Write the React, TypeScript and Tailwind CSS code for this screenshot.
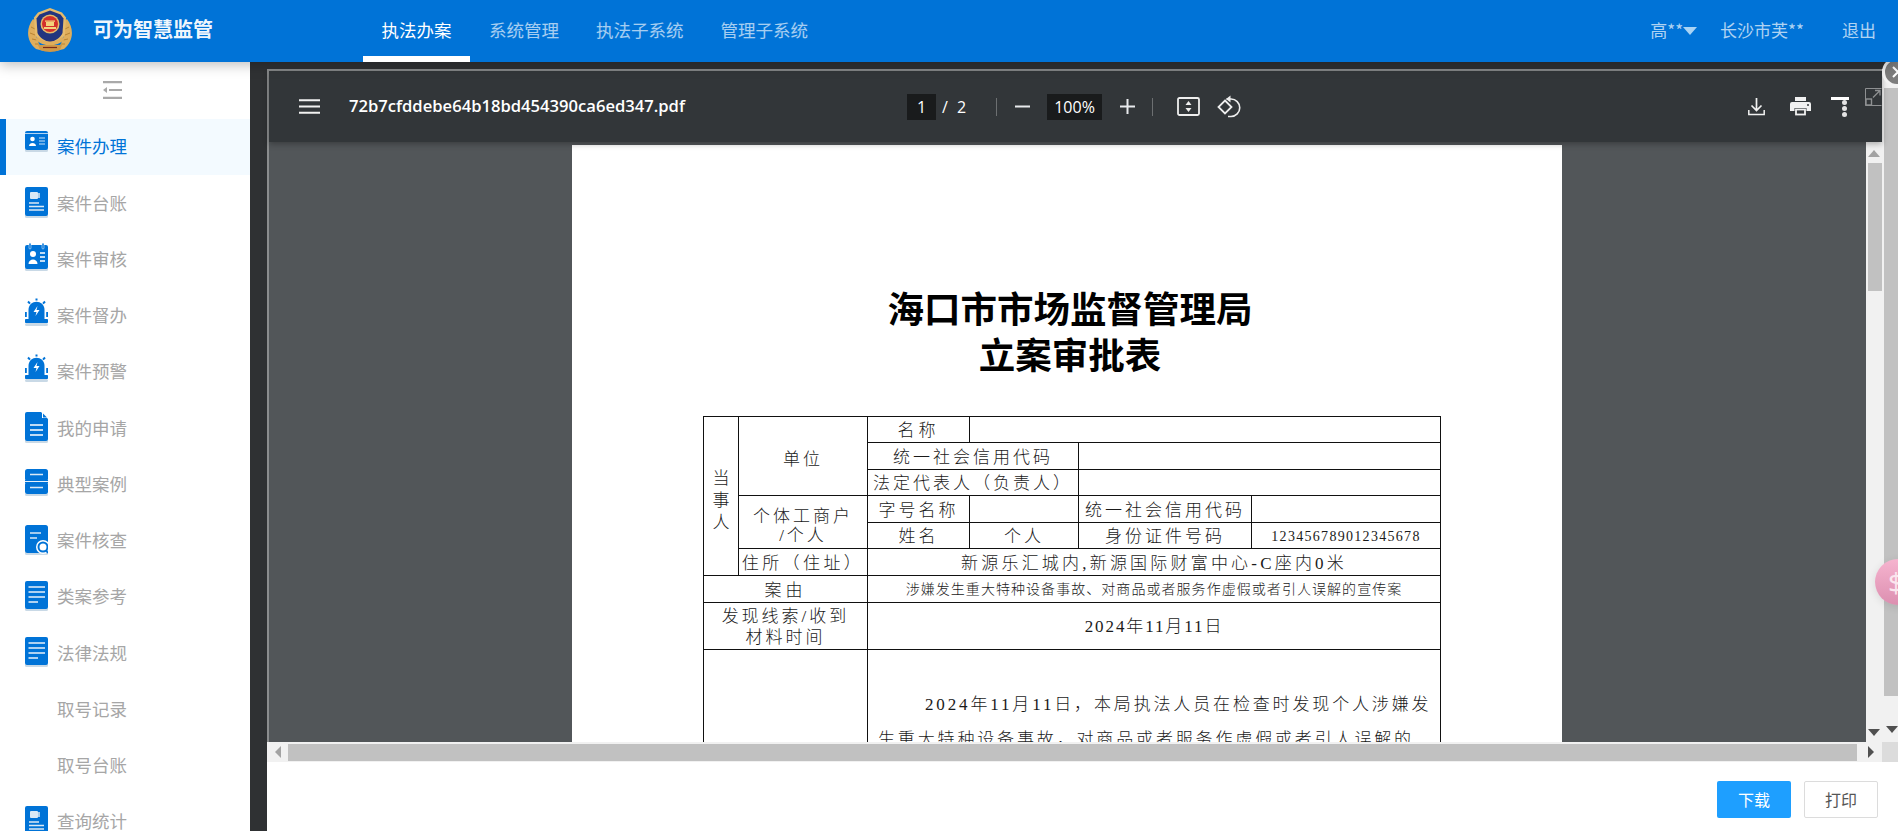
import React from "react";

const CJK = "font-['Noto_Sans','Noto_Sans_CJK_SC',sans-serif]";
const BLUE = "#0073d7";
const SHADE = "#c9d9e6";

function Logo() {
  return (
    <svg width="46" height="46" viewBox="0 0 46 46" className="shrink-0">
      <path d="M6 12 C-1 21 -1 34 9 42 L17 44 C10 36 7 25 10 15 Z" fill="#dfae5c" />
      <path d="M40 12 C47 21 47 34 37 42 L29 44 C36 36 39 25 36 15 Z" fill="#dfae5c" />
      <path d="M4 20 L8 22 M3 26 L8 28 M5 32 L9.5 33 M8 37 L12 37 M42 20 L38 22 M43 26 L38 28 M41 32 L36.5 33 M38 37 L34 37" stroke="#b98434" strokeWidth="1" />
      <path d="M23 1 L35 5.5 L39 10.5 L38 27 C36 33 29 36 23 38 C17 36 10 33 8 27 L7 10.5 L11 5.5 Z" fill="#e6bb6c" />
      <path d="M23 3.5 L33.5 7.5 L36.5 11.5 L35.5 26 C33.5 31 28 33.5 23 35.5 C18 33.5 12.5 31 10.5 26 L9.5 11.5 L12.5 7.5 Z" fill="#23357f" />
      <circle cx="23" cy="17" r="9.5" fill="#e6bb6c" />
      <circle cx="23" cy="17" r="8" fill="#d3302b" />
      <path d="M17 20 H29 V22 H17 Z M19 15 H27 V19 H19 Z M18 13.5 H28 V14.8 H18 Z" fill="#f3d27c" />
      <path d="M11 30 C17 36 29 36 35 30 L37 33 C30 40 16 40 9 33 Z" fill="#dfae5c" />
      <path d="M11 38 H35 L33 43 C26 45.5 20 45.5 13 43 Z" fill="#cf9847" />
      <path d="M16 40.5 H30" stroke="#7a2a1a" strokeWidth="1.2" />
    </svg>
  );
}

function Shade({ y, h = 3 }: { y: number; h?: number }) {
  return <rect x="0" y={y} width="23" height={h} rx="1.5" fill={SHADE} />;
}

function MenuIcon({ kind }: { kind: string }) {
  const white = "#ffffff";
  let body: React.ReactNode = null;
  if (kind === "card") {
    body = (
      <>
        <Shade y={22} h={4} />
        <rect x="0" y="5" width="23" height="19" rx="2" fill={BLUE} />
        <rect x="0" y="7" width="23" height="1" fill={white} opacity="0.7" />
        <circle cx="7.5" cy="13" r="2.3" fill={white} />
        <path d="M4 20 C4 16 11 16 11 20 Z" fill={white} />
        <path d="M14 12 H20 M14 15 H20 M14 18 H20" stroke={white} strokeWidth="1" opacity="0.8" />
      </>
    );
  } else if (kind === "book") {
    body = (
      <>
        <Shade y={32} h={4} />
        <rect x="0" y="5" width="23" height="29" rx="2" fill={BLUE} />
        <rect x="5" y="10" width="8" height="7" rx="1" fill="#dbe9f5" />
        <rect x="13" y="11" width="2" height="5" fill="#a9cdec" />
        <path d="M4 21 H14 M4 24.5 H19 M4 28 H19" stroke="#dbe9f5" strokeWidth="1.4" />
      </>
    );
  } else if (kind === "audit") {
    body = (
      <>
        <Shade y={28} h={4} />
        <rect x="0" y="6" width="23" height="24" rx="2" fill={BLUE} />
        <rect x="4" y="4" width="2" height="6" rx="1" fill={BLUE} stroke={white} strokeWidth="0.5" />
        <rect x="17" y="4" width="2" height="6" rx="1" fill={BLUE} stroke={white} strokeWidth="0.5" />
        <circle cx="8" cy="15" r="3" fill={white} />
        <path d="M3.5 25 C3.5 19 12.5 19 12.5 25 Z" fill={white} />
        <path d="M15 14 H20 M15 18 H20 M15 22 H20" stroke={white} strokeWidth="1.3" />
      </>
    );
  } else if (kind === "alarm") {
    body = (
      <>
        <Shade y={28} h={3} />
        <path d="M3.5 26 V15 C3.5 4 19.5 4 19.5 15 V26 Z" fill={BLUE} />
        <rect x="0" y="24" width="23" height="4" rx="0.8" fill={BLUE} />
        <path d="M12.5 11 L8.5 17 H11.5 L10.5 21 L14.5 15 H11.5 Z" fill={white} />
        <path d="M11.5 3.5 V5.5 M3 6.5 L5 8.6 M20 6.5 L18 8.6 M0.8 17 V22 M22.2 17 V22" stroke={BLUE} strokeWidth="2" />
      </>
    );
  } else if (kind === "doc") {
    body = (
      <>
        <Shade y={32} h={4} />
        <path d="M2 5 H16 L23 12 V32 Q23 34 21 34 H2 Q0 34 0 32 V7 Q0 5 2 5 Z" fill={BLUE} />
        <path d="M17 5 L23 11 H17 Z" fill="#ffffff" />
        <path d="M18 6.5 L22 10.5 H18 Z" fill={BLUE} />
        <path d="M5 18 H18 M5 23 H18 M5 28 H18" stroke={white} strokeWidth="1.6" />
      </>
    );
  } else if (kind === "bars") {
    body = (
      <>
        <Shade y={29} h={3} />
        <rect x="0" y="5" width="23" height="12" rx="2.5" fill={BLUE} />
        <rect x="0" y="18" width="23" height="12" rx="2.5" fill={BLUE} />
        <path d="M5 10.5 H18 M5 23.5 H18" stroke="#dbe9f5" strokeWidth="1.5" />
        <rect x="0" y="16" width="23" height="3" fill={BLUE} />
        <path d="M0 17.5 H23" stroke="#ffffff" strokeWidth="1" opacity="0.9" />
      </>
    );
  } else if (kind === "search") {
    body = (
      <>
        <Shade y={31} h={4} />
        <rect x="0" y="5" width="23" height="28" rx="2.5" fill={BLUE} />
        <path d="M5 13 H16 M5 18 H12" stroke="#dbe9f5" strokeWidth="1.6" />
        <circle cx="18" cy="27" r="7" fill="#ffffff" />
        <circle cx="18" cy="27" r="4.5" fill="none" stroke={BLUE} strokeWidth="2" />
        <path d="M21 30 L23 33" stroke={BLUE} strokeWidth="2" />
      </>
    );
  } else if (kind === "lines") {
    body = (
      <>
        <Shade y={31} h={4} />
        <rect x="0" y="5" width="23" height="28" rx="2" fill={BLUE} />
        <path d="M3.5 11 H20 M3.5 16 H20 M3.5 21 H20 M3.5 26 H13" stroke="#e7f1fa" strokeWidth="1.3" />
      </>
    );
  }
  return (
    <svg width="23" height="36" viewBox="0 0 23 36" className="shrink-0">
      {body}
    </svg>
  );
}

const MENU = [
  { t: "案件办理", k: "card", active: true },
  { t: "案件台账", k: "book" },
  { t: "案件审核", k: "audit" },
  { t: "案件督办", k: "alarm" },
  { t: "案件预警", k: "alarm" },
  { t: "我的申请", k: "doc" },
  { t: "典型案例", k: "bars" },
  { t: "案件核查", k: "search" },
  { t: "类案参考", k: "lines" },
  { t: "法律法规", k: "lines" },
  { t: "取号记录", k: "" },
  { t: "取号台账", k: "" },
  { t: "查询统计", k: "book" },
];

function Sidebar() {
  return (
    <aside className="w-[250px] shrink-0 bg-white overflow-hidden">
      <div className="h-[57px] flex items-center justify-center pr-[26px] pb-[2px]">
        <svg width="20" height="18" viewBox="0 0 20 18">
          <path d="M1 1.2 H20 M7 9 H20 M1 16.8 H20" stroke="#a9a9a9" strokeWidth="2.2" />
          <path d="M1 9 L5 6 V12 Z" fill="#a9a9a9" />
        </svg>
      </div>
      {MENU.map((m) => (
        <div
          key={m.t}
          className={
            m.active
              ? "h-[56.25px] flex items-center border-l-[6px] border-[#0073d7] bg-[#f3faff] pl-[19px] text-[#0073d7]"
              : "h-[56.25px] flex items-center pl-[25px] text-[#a6a6a6]"
          }
        >
          <div className="w-[23px] h-[36px] mt-[-6px]">{m.k ? <MenuIcon kind={m.k} /> : null}</div>
          <span className="ml-[9px] text-[17.5px] leading-none">{m.t}</span>
        </div>
      ))}
    </aside>
  );
}

function Header() {
  const nav = ["系统管理", "执法子系统", "管理子系统"];
  return (
    <header className="h-[62px] shrink-0 bg-[#0073d7] flex items-center relative z-20 shadow-[0_3px_12px_rgba(0,0,0,0.25)]">
      <div className="ml-[27px] mt-[-3px]">
        <Logo />
      </div>
      <div className="ml-[20px] w-[270px] text-[20px] font-bold text-white/95 mt-[-2px]">可为智慧监管</div>
      <div className="h-full relative w-[107px] flex items-center justify-center text-[17.5px] text-white mt-0">
        <span className="mt-[-2px]">执法办案</span>
        <div className="absolute left-0 right-0 bottom-0 h-[6px] bg-white" />
      </div>
      {nav.map((n) => (
        <div key={n} className="ml-[19px] mr-[18px] text-[17.5px] text-white/65 mt-[-2px]">
          {n}
        </div>
      ))}
      <div className="ml-auto flex items-center text-[17px] text-white/70 mt-[-2px] pr-[22px] font-['Noto_Sans_CJK_SC',sans-serif]">
        <span>高**</span>
        <svg width="14" height="8" viewBox="0 0 14 8" className="mr-[23px] mt-[2px]">
          <path d="M0 0 H14 L7 8 Z" fill="#a9d4f5" />
        </svg>
        <span className="mr-[38px]">长沙市芙**</span>
        <span>退出</span>
      </div>
    </header>
  );
}

function Divider({ ml }: { ml: string }) {
  return <div className={`w-px h-[18px] bg-[#6c6f71] ${ml}`} />;
}

function Toolbar() {
  return (
    <div className="relative z-10 h-[71px] shrink-0 bg-[#323639] shadow-[0_2px_6px_rgba(0,0,0,0.3)] flex items-center text-white font-['Open_Sans','Noto_Sans',sans-serif]">
      <svg width="21" height="15" viewBox="0 0 21 15" className="ml-[30px] shrink-0">
        <path d="M0 1.2 H21 M0 7.5 H21 M0 13.8 H21" stroke="#f1f1f1" strokeWidth="2" />
      </svg>
      <div className="ml-[29px] w-[336px] shrink-0 text-[16.6px] font-semibold whitespace-nowrap">
        72b7cfddebe64b18bd454390ca6ed347.pdf
      </div>
      <div className="ml-[222px] w-[29px] h-[26px] bg-[#191b1c] flex items-center justify-center text-[16px] shrink-0">1</div>
      <span className="ml-[6px] text-[16px]">/</span>
      <span className="ml-[9px] text-[16px]">2</span>
      <Divider ml="ml-[30px]" />
      <svg width="15" height="15" viewBox="0 0 15 15" className="ml-[18px] shrink-0">
        <path d="M0 7.5 H15" stroke="#e8eaed" strokeWidth="2" />
      </svg>
      <div className="ml-[17px] w-[55px] h-[26px] bg-[#191b1c] flex items-center justify-center text-[16px] shrink-0">100%</div>
      <svg width="15" height="15" viewBox="0 0 15 15" className="ml-[18px] shrink-0">
        <path d="M0 7.5 H15 M7.5 0 V15" stroke="#e8eaed" strokeWidth="2" />
      </svg>
      <Divider ml="ml-[17px]" />
      <svg width="23" height="19" viewBox="0 0 23 19" className="ml-[24px] shrink-0">
        <rect x="1" y="1" width="21" height="17" rx="1.5" fill="none" stroke="#eeeeee" strokeWidth="1.8" />
        <path d="M11.5 4 L14.5 8 H8.5 Z M11.5 15 L14.5 11 H8.5 Z" fill="#eeeeee" />
      </svg>
      <svg width="24" height="23" viewBox="0 0 24 23" className="ml-[17px] shrink-0">
        <path d="M8 5.5 L14.5 12 L8 18.5 L1.5 12 Z" fill="none" stroke="#eeeeee" strokeWidth="1.8" />
        <path d="M9.5 4 H14 A8.5 8.5 0 0 1 14 21.5 H11" fill="none" stroke="#eeeeee" strokeWidth="1.6" />
        <path d="M13.5 0.5 V7.5 L9 4 Z" fill="#eeeeee" />
      </svg>
      <svg width="17" height="18" viewBox="0 0 17 18" className="ml-[507px] shrink-0">
        <path d="M8.5 0 V12 M3.5 7.5 L8.5 12.5 L13.5 7.5" fill="none" stroke="#f1f1f1" strokeWidth="1.7" />
        <path d="M0.8 12 V16.5 H16.2 V12" fill="none" stroke="#f1f1f1" strokeWidth="1.5" />
      </svg>
      <svg width="21" height="19" viewBox="0 0 21 19" className="ml-[25px] shrink-0">
        <path d="M5 0 H16 V4 H5 Z" fill="#f1f1f1" />
        <path d="M2 5 H19 Q21 5 21 7 V14 H16.5 V11 H4.5 V14 H0 V7 Q0 5 2 5 Z" fill="#f1f1f1" />
        <rect x="6" y="12.5" width="9" height="5" fill="none" stroke="#f1f1f1" strokeWidth="1.8" />
        <circle cx="18" cy="8" r="1" fill="#323639" />
      </svg>
      <div className="ml-[20px] w-[18px] h-[20px] relative shrink-0">
        <div className="h-[3px] bg-white" />
        <div className="absolute left-[11px] top-[3px] w-[5px] h-[5px] rounded-full bg-[#e4e4e4]" />
        <div className="absolute left-[11px] top-[9px] w-[5px] h-[5px] rounded-full bg-[#e4e4e4]" />
        <div className="absolute left-[11px] top-[15px] w-[5px] h-[5px] rounded-full bg-[#e4e4e4]" />
      </div>
      <svg width="17" height="18" viewBox="0 0 17 18" className="absolute left-[1596px] top-[17px]">
        <path d="M0.5 17.5 V0.5 H16.5 M16.5 17.5 H0.5" fill="none" stroke="#8e9092" strokeWidth="1" />
        <rect x="1" y="11" width="5.5" height="6" fill="none" stroke="#8e9092" strokeWidth="1.4" />
        <path d="M8 9.5 L15 2.5 M10 2.5 H15 V7.5" fill="none" stroke="#8e9092" strokeWidth="1.3" />
      </svg>
    </div>
  );
}

function Td({
  children,
  colSpan,
  rowSpan,
  cls = "",
}: {
  children?: React.ReactNode;
  colSpan?: number;
  rowSpan?: number;
  cls?: string;
}) {
  return (
    <td colSpan={colSpan} rowSpan={rowSpan} className={`border border-[#111] p-0 text-center align-middle overflow-hidden ${cls}`}>
      {children}
    </td>
  );
}

function PdfTable() {
  const sp = "tracking-[3px] pt-[2px]";
  return (
    <table className="w-[737px] ml-[131px] table-fixed border-collapse text-[17px] leading-[21px] font-light text-[#1a1a1a] font-['Liberation_Serif','Noto_Sans_CJK_SC',serif]">
      <colgroup>
        <col className="w-[35px]" />
        <col className="w-[129px]" />
        <col className="w-[102px]" />
        <col className="w-[109px]" />
        <col className="w-[173px]" />
        <col className="w-[189px]" />
      </colgroup>
      <tbody>
        <tr className="h-[26px]">
          <Td rowSpan={6} cls="leading-[22px] pt-[10px]">
            当<br />事<br />人
          </Td>
          <Td rowSpan={3} cls={`${sp} pt-[6px]`}>单位</Td>
          <Td cls="tracking-[4px] pt-[2px]">名称</Td>
          <Td colSpan={3} />
        </tr>
        <tr className="h-[27px]">
          <Td colSpan={2} cls={sp}>统一社会信用代码</Td>
          <Td colSpan={2} />
        </tr>
        <tr className="h-[26px]">
          <Td colSpan={2} cls="tracking-[3px] pt-[2px] whitespace-nowrap">法定代表人（负责人）</Td>
          <Td colSpan={2} />
        </tr>
        <tr className="h-[27px]">
          <Td rowSpan={2} cls="tracking-[3px] leading-[19px] pt-[7px]">
            个体工商户
            <br />
            /个人
          </Td>
          <Td cls={sp}>字号名称</Td>
          <Td />
          <Td cls={sp}>统一社会信用代码</Td>
          <Td />
        </tr>
        <tr className="h-[26px]">
          <Td cls={sp}>姓名</Td>
          <Td cls={sp}>个人</Td>
          <Td cls={sp}>身份证件号码</Td>
          <Td cls="text-[14px] tracking-[1.3px] pt-[2px]">123456789012345678</Td>
        </tr>
        <tr className="h-[27px]">
          <Td cls="tracking-[3.4px] pt-[2px] whitespace-nowrap">住所（住址）</Td>
          <Td colSpan={4} cls="tracking-[3.2px] pt-[2px] whitespace-nowrap">新源乐汇城内,新源国际财富中心-C座内0米</Td>
        </tr>
        <tr className="h-[27px]">
          <Td colSpan={2} cls="tracking-[4px] pt-[2px]">案由</Td>
          <Td colSpan={4} cls="text-[14px] tracking-[1.05px] whitespace-nowrap">涉嫌发生重大特种设备事故、对商品或者服务作虚假或者引人误解的宣传案</Td>
        </tr>
        <tr className="h-[47px]">
          <Td colSpan={2} cls="tracking-[3px] leading-[21px] pt-[1px]">
            发现线索/收到
            <br />
            材料时间
          </Td>
          <Td colSpan={4} cls="tracking-[1.9px]">2024年11月11日</Td>
        </tr>
        <tr className="h-[300px]">
          <Td colSpan={2} />
          <Td colSpan={4} cls="align-top">
            <p className="mt-[37px] px-[10px] text-left tracking-[2.85px] leading-[35px] indent-[47px] whitespace-nowrap">
              2024年11月11日，本局执法人员在检查时发现个人涉嫌发
              <br />
              生重大特种设备事故，对商品或者服务作虚假或者引人误解的
            </p>
          </Td>
        </tr>
      </tbody>
    </table>
  );
}

function Tri({ d, x = "" }: { d: string; x?: string }) {
  const paths: Record<string, string> = {
    up: "M0 8 L6 1 L12 8 Z",
    down: "M0 1 H12 L6 8 Z",
  };
  return (
    <svg width="12" height="9" viewBox="0 0 12 9" className={x}>
      <path d={paths[d]} fill={d === "up" ? "#a3a3a3" : "#505050"} />
    </svg>
  );
}

function PdfViewer() {
  return (
    <div className="flex-1 min-w-0 flex flex-col border-t-2 border-l-2 border-[#8b8d8e]">
      <Toolbar />
      <div className="flex-1 min-h-0 flex">
        <div className="flex-1 min-w-0 bg-[#525659] overflow-hidden pt-[3px] pl-[303px]">
          <div className="w-[990px] h-[1000px] bg-white pt-[140px]">
            <div className="text-[36.5px] leading-[46px] font-bold text-center text-black mb-[39px] ml-[6px] font-['Noto_Sans_CJK_SC',sans-serif]">
              海口市市场监督管理局
              <br />
              立案审批表
            </div>
            <PdfTable />
          </div>
        </div>
        <div className="w-[16px] shrink-0 bg-[#f1f1f1] flex flex-col items-center">
          <Tri d="up" x="mt-[7px]" />
          <div className="mt-[5px] w-[14px] ml-[2px] h-[128px] bg-[#c1c1c1]" />
          <div className="flex-1" />
          <Tri d="down" x="mb-[5px]" />
        </div>
      </div>
    </div>
  );
}

function OuterScrollbar() {
  return (
    <div className="w-[16px] shrink-0 bg-[#f1f1f1] flex flex-col pl-[2px] pt-[19px]">
      <div className="flex-1 bg-[#c1c1c1] mb-[29px]" />
      <Tri d="down" x="mb-[8px] ml-[2px]" />
    </div>
  );
}

function HScroll() {
  return (
    <div className="h-[20px] shrink-0 flex">
      <div className="flex-1 bg-[#f1f1f1] flex items-center pl-[7px]">
        <svg width="8" height="12" viewBox="0 0 8 12" className="shrink-0">
          <path d="M7 0 V12 L1 6 Z" fill="#a3a3a3" />
        </svg>
        <div className="ml-[6px] w-[1569px] h-[17px] bg-[#c1c1c1] shrink-0" />
        <svg width="8" height="12" viewBox="0 0 8 12" className="ml-[10px] shrink-0">
          <path d="M1 0 V12 L7 6 Z" fill="#505050" />
        </svg>
      </div>
      <div className="w-[16px] bg-[#dcdcdc] shrink-0" />
    </div>
  );
}

function Footer() {
  return (
    <div className="h-[69px] shrink-0 bg-white flex items-start justify-end pt-[19px] pr-[20px] gap-[13px]">
      <button className="w-[74px] h-[37px] rounded-[2px] bg-[#1e9fff] text-white text-[16px]">下载</button>
      <button className="w-[74px] h-[37px] rounded-[2px] bg-white border border-[#dcdcdc] text-[#555] text-[16px]">打印</button>
    </div>
  );
}

export default function App() {
  return (
    <div className={`w-[1898px] h-[831px] overflow-hidden flex flex-col relative ${CJK}`}>
      <Header />
      <div className="flex-1 min-h-0 flex">
        <Sidebar />
        <main className="flex-1 min-w-0 bg-[#2f3133] pl-[17px] pt-[7px] flex flex-col">
          <div className="flex-1 min-h-0 flex bg-white">
            <PdfViewer />
            <OuterScrollbar />
          </div>
          <HScroll />
          <Footer />
        </main>
      </div>
      <div className="absolute left-[1882px] top-[57px] w-[30px] h-[30px] rounded-full bg-[#7d7d7d] border-[3px] border-white/90 flex items-center pl-[7px] z-10">
        <svg width="12" height="12" viewBox="0 0 12 12">
          <path d="M1 1 L11 11 M11 1 L1 11" stroke="#ffffff" strokeWidth="2" />
        </svg>
      </div>
      <div className="absolute left-[1875px] top-[559px] w-[46px] h-[46px] rounded-full bg-gradient-to-b from-[#f6b4cf] to-[#dc8fb0] flex items-center pl-[13px] text-[#fbe6ee] text-[28px] z-30 shadow-[0_2px_8px_rgba(0,0,0,0.1)]">
        $
      </div>
    </div>
  );
}
